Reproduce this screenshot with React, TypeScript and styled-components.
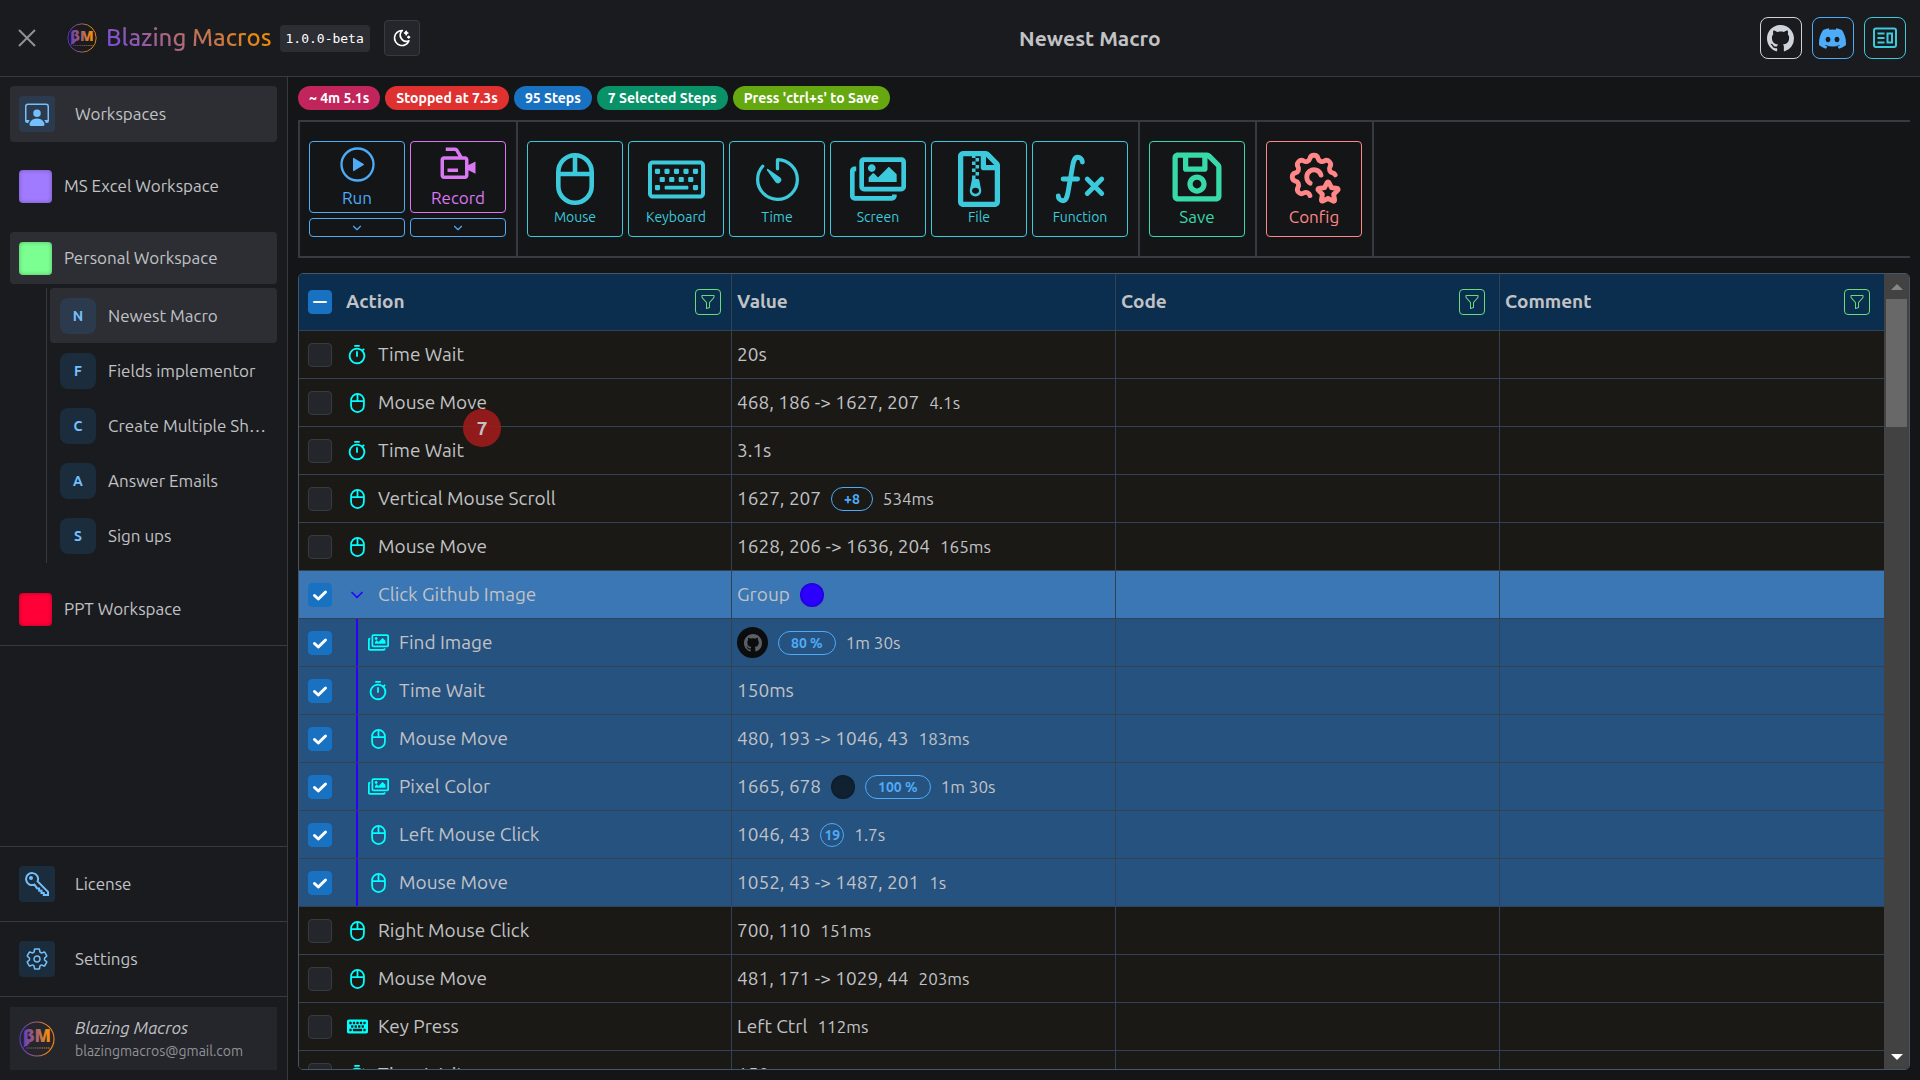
import React from "react";
import styled, { createGlobalStyle } from "styled-components";
import { BsPersonWorkspace, BsGithub, BsDiscord, BsFunnel } from "react-icons/bs";
import { IoSettingsOutline, IoTimerOutline } from "react-icons/io5";
import { MdOutlineTimer } from "react-icons/md";
import { BiVideoRecording } from "react-icons/bi";
import { FaRegKeyboard, FaKeyboard, FaRegImages, FaRegFileArchive, FaRegSave } from "react-icons/fa";
import { TbMathFunction, TbSettingsStar, TbMoonStars } from "react-icons/tb";
import { FiChevronDown } from "react-icons/fi";

const c = {
  bg: "#1a1b1e",
  main: "#141517",
  raised: "#2c2e33",
  card: "#25262b",
  line: "#373a40",
  text: "#c1c2c5",
  dim: "#909296",
  blue: "#4dabf7",
  sky: "#74c0fc",
  cyan: "#3bc9db",
  aqua: "#00ffff",
  grid: "#334155",
};

const GlobalStyle = createGlobalStyle`
  * { box-sizing: border-box; }
  body {
    margin: 0;
    background: ${c.bg};
    color: ${c.text};
    font-family: Ubuntu, "Open Sans", "Noto Sans", sans-serif;
    font-size: 17px;
    line-height: 24px;
  }
  button, input { font: inherit; color: inherit; margin: 0; }
  button { cursor: pointer; }
  svg { display: block; flex: none; }
`;

const Shell = styled.div`
  display: grid;
  grid-template: auto minmax(0, 1fr) / 288px minmax(0, 1fr);
  height: 100vh;
`;

/* ---------- header ---------- */
const Header = styled.header`
  grid-column: 1 / -1;
  display: flex;
  align-items: center;
  justify-content: space-between;
  height: 77px;
  padding: 0 14px 0 16px;
  border-bottom: 1px solid ${c.line};
`;
const HeaderGroup = styled.div<{ $gap?: number }>`
  display: flex;
  align-items: center;
  gap: ${(p) => p.$gap ?? 0}px;
`;
const PlainButton = styled.button`
  display: grid;
  place-items: center;
  width: 22px;
  height: 22px;
  padding: 0;
  border: 0;
  background: none;
  color: ${c.dim};
`;
const Brand = styled.div`
  display: flex;
  align-items: center;
  gap: 9px;
  margin: 0 8px 0 29px;
`;
const BrandName = styled.span`
  font-size: 24px;
  line-height: 36px;
  font-weight: 500;
  background: linear-gradient(45deg, #7048e8 0%, #f08c00 90%);
  -webkit-background-clip: text;
  background-clip: text;
  color: transparent;
`;
const Version = styled.code`
  padding: 0 6px;
  margin-right: 14px;
  border-radius: 4px;
  background: ${c.raised};
  color: #fff;
  font-family: "DejaVu Sans Mono", monospace;
  font-size: 13px;
  line-height: 27px;
`;
const ThemeButton = styled.button`
  display: grid;
  place-items: center;
  width: 36px;
  height: 36px;
  padding: 0;
  border: 1px solid ${c.line};
  border-radius: 4px;
  background: ${c.card};
  color: #fff;
`;
const PageTitle = styled.h1`
  margin: 0;
  font-size: 21px;
  line-height: 32px;
  font-weight: 700;
`;
const SocialLink = styled.a<{ $color: string }>`
  display: grid;
  place-items: center;
  width: 42px;
  height: 42px;
  border: 1px solid ${(p) => p.$color};
  border-radius: 8px;
  color: ${(p) => p.$color};
`;

/* ---------- sidebar ---------- */
const Sidebar = styled.nav`
  display: flex;
  flex-direction: column;
  min-height: 0;
  border-right: 1px solid ${c.line};
`;
const Workspaces = styled.div`
  display: flex;
  flex-direction: column;
  padding: 9px 10px 10px;
  border-bottom: 1px solid ${c.line};
`;
const NavButton = styled.button<{ $active?: boolean; $wide?: boolean }>`
  display: flex;
  align-items: center;
  gap: ${(p) => (p.$wide ? 20 : 12)}px;
  width: 100%;
  height: ${(p) => (p.$wide ? 56 : 52)}px;
  padding: 0 9px;
  border: 0;
  border-radius: 4px;
  background: ${(p) => (p.$active ? c.raised : "transparent")};
  text-align: left;
`;
const WorkspaceList = styled.div`
  display: flex;
  flex-direction: column;
  gap: 20px;
  padding-top: 18px;
`;
const Swatch = styled.span<{ $color: string }>`
  flex: none;
  width: 33px;
  height: 33px;
  border-radius: 4px;
  background: ${(p) => p.$color};
  box-shadow: inset 0 0 4px rgba(0, 0, 0, 0.3);
`;
const IconTile = styled.span<{ $active?: boolean; $round?: boolean }>`
  display: grid;
  place-items: center;
  flex: none;
  width: 36px;
  height: 36px;
  border-radius: ${(p) => (p.$round ? 8 : 4)}px;
  background: ${(p) => (p.$active ? "#2b3b4d" : "#1b2c3c")};
  color: ${c.sky};
  font-size: 14px;
  font-weight: 700;
`;
const MacroList = styled.div`
  display: flex;
  flex-direction: column;
  height: 275px;
  margin: 4px 0 0 36px;
  padding-left: 3px;
  border-left: 1px solid ${c.line};
`;
const MacroButton = styled(NavButton)`
  flex: 1;
  padding: 0 10px;
`;
const Clip = styled.span`
  overflow: hidden;
  text-overflow: ellipsis;
  white-space: nowrap;
`;
const SideFooter = styled.div`
  margin-top: auto;
`;
const FooterRow = styled.div`
  padding: 9px 10px;
  border-top: 1px solid ${c.line};
`;
const UserRow = styled(FooterRow)`
  padding: 10px;
`;
const UserCard = styled.div`
  display: flex;
  align-items: center;
  gap: 20px;
  height: 63px;
  padding: 0 9px;
  background: ${c.card};
`;
const UserText = styled.div`
  display: flex;
  flex-direction: column;
`;
const UserName = styled.em`
  line-height: 24px;
`;
const UserMail = styled.span`
  color: ${c.dim};
  font-size: 14px;
  line-height: 22px;
`;

/* ---------- main ---------- */
const Main = styled.main`
  display: flex;
  flex-direction: column;
  min-width: 0;
  min-height: 0;
  padding: 9px 10px 10px;
  background: ${c.main};
`;
const Badges = styled.div`
  display: flex;
  gap: 5px;
`;
const Badge = styled.span<{ $color: string }>`
  padding: 0 11px;
  border-radius: 12px;
  background: ${(p) => p.$color};
  color: #fff;
  font-size: 14px;
  line-height: 24px;
  font-weight: 700;
`;
const Toolbar = styled.div`
  display: flex;
  flex: none;
  height: 138px;
  margin: 10px 0 15px;
  border: 2px solid ${c.line};
  border-right: 0;
`;
const ToolGroup = styled.div`
  display: flex;
  align-items: center;
  gap: 5px;
  padding: 0 10px 0 9px;
  border-right: 2px solid ${c.line};
`;
const SplitButton = styled.div`
  display: flex;
  flex-direction: column;
  gap: 5px;
`;
const ToolButton = styled.button<{ $color: string; $h: number; $large?: boolean }>`
  display: flex;
  flex-direction: column;
  align-items: center;
  justify-content: ${(p) => (p.$h < 30 ? "center" : "flex-end")};
  width: 96px;
  height: ${(p) => p.$h}px;
  padding: ${(p) => (p.$h > 80 ? "0 0 7px" : p.$h > 30 ? "0 0 2px" : "0")};
  border: 1px solid ${(p) => p.$color};
  border-radius: 4px;
  background: none;
  color: ${(p) => p.$color};
  font-size: ${(p) => (p.$large ? 17 : 14)}px;
  line-height: 24px;
`;
const ToolIcon = styled.span<{ $h: number }>`
  display: grid;
  grid-template-rows: 100%;
  place-items: center;
  height: ${(p) => p.$h}px;
`;

/* ---------- table ---------- */
const TableBox = styled.section`
  position: relative;
  display: flex;
  flex: 1;
  min-height: 0;
  overflow: hidden;
  border: 1px solid #475569;
  border-radius: 5px;
`;
const TableView = styled.div`
  flex: 1;
  min-width: 0;
  overflow: hidden;
`;
const Table = styled.table`
  width: 100%;
  border-collapse: separate;
  border-spacing: 0;
  table-layout: fixed;
  font-size: 19px;
`;
const HeadCell = styled.th`
  padding: 0 14px 0 5px;
  border-bottom: 1px solid ${c.grid};
  border-right: 1px solid ${c.grid};
  background: #0b2e4e;
  text-align: left;
  font-size: 19px;
  font-weight: 700;
  &:first-child { width: 433px; padding: 0 10px 0 9px; }
  &:last-child { border-right: 0; }
`;
const HeadInner = styled.div`
  display: flex;
  align-items: center;
  height: 56px;
`;
const Row = styled.tr<{ $tone?: "group" | "child" }>`
  background: ${(p) =>
    p.$tone === "group" ? "#3a77b4" : p.$tone === "child" ? "#265280" : "#1a1916"};
`;
const Cell = styled.td`
  padding: 0 5px;
  border-bottom: 1px solid ${c.grid};
  border-right: 1px solid ${c.grid};
  &:first-child { padding-left: 9px; }
  &:last-child { border-right: 0; }
`;
const CellInner = styled.div<{ $gap?: number }>`
  display: flex;
  align-items: center;
  gap: ${(p) => p.$gap ?? 0}px;
  height: 47px;
  white-space: nowrap;
`;
const CellText = styled.span`
  line-height: 22px;
  padding-bottom: 2px;
`;
const Check = styled.label`
  display: grid;
  flex: none;
  width: 24px;
  height: 24px;
  margin-right: 14px;
  place-items: center;
  > * { grid-area: 1 / 1; }
  svg { visibility: hidden; pointer-events: none; z-index: 0; }
  input:checked + svg { visibility: visible; }
`;
const CheckInput = styled.input`
  appearance: none;
  width: 24px;
  height: 24px;
  border: 1px solid ${c.line};
  border-radius: 4px;
  background: ${c.card};
  &:checked { background: #1971c2; border-color: #1971c2; }
`;
const Branch = styled.span`
  align-self: stretch;
  width: 2px;
  margin: 0 9px 0 10px;
  background: #2b00ff;
`;
const RowIcon = styled.span<{ $color?: string }>`
  display: grid;
  place-items: center;
  width: 22px;
  margin-right: 10px;
  color: ${(p) => p.$color ?? c.aqua};
`;
const FilterButton = styled.button`
  display: grid;
  place-items: center;
  width: 26px;
  height: 26px;
  margin-left: auto;
  padding: 0;
  border: 1px solid #69db7c;
  border-radius: 4px;
  background: none;
  color: #69db7c;
`;
const Duration = styled.span`
  font-size: 17px;
`;
const Pill = styled.span<{ $round?: boolean }>`
  min-width: 24px;
  padding: 0 ${(p) => (p.$round ? 0 : 12)}px;
  border: 1px solid ${c.blue};
  border-radius: 12px;
  color: ${c.blue};
  font-size: 14px;
  line-height: 22px;
  font-weight: 700;
  text-align: center;
`;
const Dot = styled.span<{ $color: string }>`
  width: 24px;
  height: 24px;
  border-radius: 50%;
  background: ${(p) => p.$color};
  box-shadow: inset 0 0 3px rgba(0, 0, 0, 0.4);
`;
const Thumb = styled.span`
  display: grid;
  place-items: center;
  width: 31px;
  height: 31px;
  border-radius: 50%;
  background: #0b0c0e;
  color: #5c5f66;
`;
const DragCount = styled.span`
  position: absolute;
  left: 164px;
  top: 135px;
  width: 38px;
  height: 38px;
  border-radius: 50%;
  background: rgba(155, 28, 28, 0.93);
  font-size: 19px;
  line-height: 38px;
  font-weight: 700;
  text-align: center;
`;
const Scrollbar = styled.div`
  display: flex;
  flex-direction: column;
  flex: none;
  width: 25px;
  background: #424242;
`;
const ScrollArrow = styled.button<{ $color: string }>`
  display: grid;
  place-items: center;
  height: 25px;
  padding: 0;
  border: 0;
  background: none;
  color: ${(p) => p.$color};
`;
const ScrollTrack = styled.div`
  flex: 1;
  padding: 0 2px;
`;
const ScrollThumb = styled.div`
  height: 128px;
  background: #686868;
`;

/* ---------- drawings ---------- */
function Logo({ size, id }: { size: number; id: string }) {
  return (
    <svg width={size} height={size} viewBox="0 0 36 36" aria-hidden="true">
      <defs>
        <linearGradient id={id} x1="0" x2="36" y1="0" y2="0" gradientUnits="userSpaceOnUse">
          <stop offset="0.05" stopColor="#6038c8" />
          <stop offset="0.5" stopColor="#a8646a" />
          <stop offset="0.8" stopColor="#f08c10" />
        </linearGradient>
      </defs>
      <circle cx="18" cy="18" r="17" fill="none" stroke={`url(#${id})`} strokeWidth="1.1" />
      <text
        x="18"
        y="21"
        textAnchor="middle"
        fill={`url(#${id})`}
        fontFamily="'Open Sans', sans-serif"
        fontSize="17"
        fontWeight="800"
      >
        βM
      </text>
      <path d="M4 27 L8 19 L11 22 Z" fill={`url(#${id})`} />
      <path d="M7 27H31" stroke={`url(#${id})`} strokeWidth="1.4" strokeDasharray="1.6 .6" opacity=".6" />
    </svg>
  );
}

const NewsIcon = () => (
  <svg width="26" height="26" viewBox="0 0 26 26" fill="none" stroke="currentColor" strokeWidth="2" aria-hidden="true">
    <rect x="2" y="3.5" width="22" height="18.5" rx="2" />
    <path d="M5.5 8.5h7M5.5 13h7M5.5 17.5h7" strokeWidth="2.2" />
    <rect x="15.5" y="8.5" width="4.5" height="9" />
  </svg>
);

const MouseIcon = ({ height }: { height: number }) => (
  <svg width={Math.round((height * 19) / 26)} height={height} viewBox="0 0 19 26" fill="none" stroke="currentColor" strokeWidth="2.3" aria-hidden="true">
    <rect x="1.15" y="1.15" width="16.7" height="23.7" rx="8.35" />
    <path d="M1.2 10.5h16.6M9.5 1.2v9.3" />
  </svg>
);

const KeyIcon = () => (
  <svg width="24" height="24" viewBox="0 0 24 24" fill="none" stroke="currentColor" strokeWidth="2" aria-hidden="true">
    <path d="M12.6 9.4 23 19.8V23h-4.2v-2h-2.3v-2.3h-2.3v-2.3h-2L9.4 12.6A6 6 0 1 1 12.6 9.4Z" />
    <circle cx="6" cy="6" r="2" fill="currentColor" stroke="none" />
  </svg>
);

const PlayIcon = () => (
  <svg width="35" height="35" viewBox="0 0 35 35" aria-hidden="true">
    <circle cx="17.5" cy="17.5" r="16" fill="none" stroke="currentColor" strokeWidth="2.3" />
    <path d="M13 11.4v12.2a.6.6 0 0 0 .9.5l9.8-6.1a.6.6 0 0 0 0-1l-9.8-6.1a.6.6 0 0 0-.9.5z" fill="currentColor" />
  </svg>
);

const SelectBox = ({ label, on, mixed }: { label: string; on?: boolean; mixed?: boolean }) => (
  <Check>
    <CheckInput type="checkbox" aria-label={label} defaultChecked={on} />
    <svg width="16" height="16" viewBox="0 0 16 16" fill="none" stroke="#fff" strokeWidth="3" strokeLinecap="round" strokeLinejoin="round">
      {mixed ? <path d="M2 8h12" strokeWidth="2" /> : <path d="M2.5 8.5 6.3 12 13.5 5" />}
    </svg>
  </Check>
);

const Filter = ({ label }: { label: string }) => (
  <FilterButton aria-label={label}>
    <BsFunnel size={16} />
  </FilterButton>
);

const icons = {
  time: <MdOutlineTimer size={22} />,
  mouse: <MouseIcon height={20} />,
  image: <FaRegImages size={21} />,
  key: <FaKeyboard size={21} />,
  chevron: <FiChevronDown size={20} />,
};

type Step = {
  icon: keyof typeof icons;
  name: string;
  tone?: "group" | "child";
  text?: string;
  extra?: React.ReactNode;
  time?: string;
};

const steps: Step[] = [
  { icon: "time", name: "Time Wait", text: "20s" },
  { icon: "mouse", name: "Mouse Move", text: "468, 186 -> 1627, 207", time: "4.1s" },
  { icon: "time", name: "Time Wait", text: "3.1s" },
  { icon: "mouse", name: "Vertical Mouse Scroll", text: "1627, 207", extra: <Pill>+8</Pill>, time: "534ms" },
  { icon: "mouse", name: "Mouse Move", text: "1628, 206 -> 1636, 204", time: "165ms" },
  { icon: "chevron", name: "Click Github Image", tone: "group", text: "Group", extra: <Dot $color="#2b00ff" /> },
  { icon: "image", name: "Find Image", tone: "child", extra: <><Thumb><BsGithub size={18} /></Thumb><Pill>80 %</Pill></>, time: "1m 30s" },
  { icon: "time", name: "Time Wait", tone: "child", text: "150ms" },
  { icon: "mouse", name: "Mouse Move", tone: "child", text: "480, 193 -> 1046, 43", time: "183ms" },
  { icon: "image", name: "Pixel Color", tone: "child", text: "1665, 678", extra: <><Dot $color="#102232" /><Pill>100 %</Pill></>, time: "1m 30s" },
  { icon: "mouse", name: "Left Mouse Click", tone: "child", text: "1046, 43", extra: <Pill $round>19</Pill>, time: "1.7s" },
  { icon: "mouse", name: "Mouse Move", tone: "child", text: "1052, 43 -> 1487, 201", time: "1s" },
  { icon: "mouse", name: "Right Mouse Click", text: "700, 110", time: "151ms" },
  { icon: "mouse", name: "Mouse Move", text: "481, 171 -> 1029, 44", time: "203ms" },
  { icon: "key", name: "Key Press", text: "Left Ctrl", time: "112ms" },
  { icon: "time", name: "Time Wait", text: "150ms" },
];

const macros = ["Newest Macro", "Fields implementor", "Create Multiple Sheets", "Answer Emails", "Sign ups"];

const badges = [
  ["~ 4m 5.1s", "#c2255c"],
  ["Stopped at 7.3s", "#e03131"],
  ["95 Steps", "#1971c2"],
  ["7 Selected Steps", "#099268"],
  ["Press 'ctrl+s' to Save", "#66a80f"],
];

const insertTools = [
  { label: "Mouse", icon: <MouseIcon height={52} /> },
  { label: "Keyboard", icon: <FaRegKeyboard size={57} /> },
  { label: "Time", icon: <IoTimerOutline size={53} /> },
  { label: "Screen", icon: <FaRegImages size={56} /> },
  { label: "File", icon: <FaRegFileArchive size={56} /> },
  { label: "Function", icon: <TbMathFunction size={58} /> },
];

export default function App() {
  return (
    <Shell>
      <GlobalStyle />
      <Header>
        <HeaderGroup>
          <PlainButton aria-label="Close navigation">
            <svg width="18" height="18" viewBox="0 0 18 18" stroke="currentColor" strokeWidth="2">
              <path d="M1 1 17 17M17 1 1 17" />
            </svg>
          </PlainButton>
          <Brand>
            <Logo size={30} id="logo-head" />
            <BrandName>Blazing Macros</BrandName>
          </Brand>
          <Version>1.0.0-beta</Version>
          <ThemeButton aria-label="Toggle color scheme">
            <TbMoonStars size={20} />
          </ThemeButton>
        </HeaderGroup>
        <PageTitle>Newest Macro</PageTitle>
        <HeaderGroup $gap={10}>
          <SocialLink href="#github" aria-label="GitHub" $color="#ced4da"><BsGithub size={27} /></SocialLink>
          <SocialLink href="#discord" aria-label="Discord" $color={c.blue}><BsDiscord size={27} /></SocialLink>
          <SocialLink href="#news" aria-label="News" $color={c.cyan}><NewsIcon /></SocialLink>
        </HeaderGroup>
      </Header>

      <Sidebar>
        <Workspaces>
          <NavButton $active $wide>
            <IconTile $active><BsPersonWorkspace size={24} /></IconTile>
            Workspaces
          </NavButton>
          <WorkspaceList>
            <NavButton><Swatch $color="#a07aff" />MS Excel Workspace</NavButton>
            <div>
              <NavButton $active><Swatch $color="#7aff90" />Personal Workspace</NavButton>
              <MacroList>
                {macros.map((name, i) => (
                  <MacroButton key={name} $active={i === 0}>
                    <IconTile $round $active={i === 0}>{name[0]}</IconTile>
                    <Clip>{name}</Clip>
                  </MacroButton>
                ))}
              </MacroList>
            </div>
            <NavButton><Swatch $color="#ff0037" />PPT Workspace</NavButton>
          </WorkspaceList>
        </Workspaces>
        <SideFooter>
          <FooterRow>
            <NavButton $wide><IconTile><KeyIcon /></IconTile>License</NavButton>
          </FooterRow>
          <FooterRow>
            <NavButton $wide><IconTile><IoSettingsOutline size={24} /></IconTile>Settings</NavButton>
          </FooterRow>
          <UserRow>
            <UserCard>
              <Logo size={36} id="logo-user" />
              <UserText>
                <UserName>Blazing Macros</UserName>
                <UserMail>blazingmacros@gmail.com</UserMail>
              </UserText>
            </UserCard>
          </UserRow>
        </SideFooter>
      </Sidebar>

      <Main>
        <Badges>
          {badges.map(([label, color]) => (
            <Badge key={label} $color={color}>{label}</Badge>
          ))}
        </Badges>
        <Toolbar>
          <ToolGroup>
            <SplitButton>
              <ToolButton $color={c.blue} $h={72} $large>
                <ToolIcon $h={43}><PlayIcon /></ToolIcon>
                Run
              </ToolButton>
              <ToolButton $color={c.blue} $h={19} aria-label="Run options"><FiChevronDown size={14} /></ToolButton>
            </SplitButton>
            <SplitButton>
              <ToolButton $color="#da77f2" $h={72} $large>
                <ToolIcon $h={43}><BiVideoRecording size={42} /></ToolIcon>
                Record
              </ToolButton>
              <ToolButton $color={c.blue} $h={19} aria-label="Record options"><FiChevronDown size={14} /></ToolButton>
            </SplitButton>
          </ToolGroup>
          <ToolGroup>
            {insertTools.map((t) => (
              <ToolButton key={t.label} $color={c.cyan} $h={96}>
                <ToolIcon $h={52}>{t.icon}</ToolIcon>
                {t.label}
              </ToolButton>
            ))}
          </ToolGroup>
          <ToolGroup>
            <ToolButton $color="#38d9a9" $h={96} $large>
              <ToolIcon $h={56}><FaRegSave size={56} /></ToolIcon>
              Save
            </ToolButton>
          </ToolGroup>
          <ToolGroup>
            <ToolButton $color="#ff8787" $h={96} $large>
              <ToolIcon $h={56}><TbSettingsStar size={58} /></ToolIcon>
              Config
            </ToolButton>
          </ToolGroup>
        </Toolbar>

        <TableBox>
          <TableView>
            <Table>
              <thead>
                <tr>
                  <HeadCell scope="col">
                    <HeadInner>
                      <SelectBox label="Select all steps" on mixed />
                      <CellText>Action</CellText>
                      <Filter label="Filter by action" />
                    </HeadInner>
                  </HeadCell>
                  <HeadCell scope="col"><HeadInner><CellText>Value</CellText></HeadInner></HeadCell>
                  <HeadCell scope="col"><HeadInner><CellText>Code</CellText><Filter label="Filter by code" /></HeadInner></HeadCell>
                  <HeadCell scope="col"><HeadInner><CellText>Comment</CellText><Filter label="Filter by comment" /></HeadInner></HeadCell>
                </tr>
              </thead>
              <tbody>
                {steps.map((s, i) => (
                  <Row key={i} $tone={s.tone}>
                    <Cell>
                      <CellInner>
                        <SelectBox label={`Select ${s.name}`} on={!!s.tone} />
                        {s.tone === "child" && <Branch />}
                        <RowIcon $color={s.tone === "group" ? "#2b00ff" : undefined}>{icons[s.icon]}</RowIcon>
                        <CellText>{s.name}</CellText>
                      </CellInner>
                    </Cell>
                    <Cell>
                      <CellInner $gap={10}>
                        {s.text && <CellText>{s.text}</CellText>}
                        {s.extra}
                        {s.time && <Duration>{s.time}</Duration>}
                      </CellInner>
                    </Cell>
                    <Cell />
                    <Cell />
                  </Row>
                ))}
              </tbody>
            </Table>
          </TableView>
          <Scrollbar>
            <ScrollArrow aria-label="Scroll up" $color="#868686">
              <svg width="12" height="6" viewBox="0 0 12 6" fill="currentColor"><path d="M0 6 6 0l6 6z" /></svg>
            </ScrollArrow>
            <ScrollTrack><ScrollThumb /></ScrollTrack>
            <ScrollArrow aria-label="Scroll down" $color="#ffffff">
              <svg width="12" height="6" viewBox="0 0 12 6" fill="currentColor"><path d="M0 0h12L6 6z" /></svg>
            </ScrollArrow>
          </Scrollbar>
          <DragCount>7</DragCount>
        </TableBox>
      </Main>
    </Shell>
  );
}
